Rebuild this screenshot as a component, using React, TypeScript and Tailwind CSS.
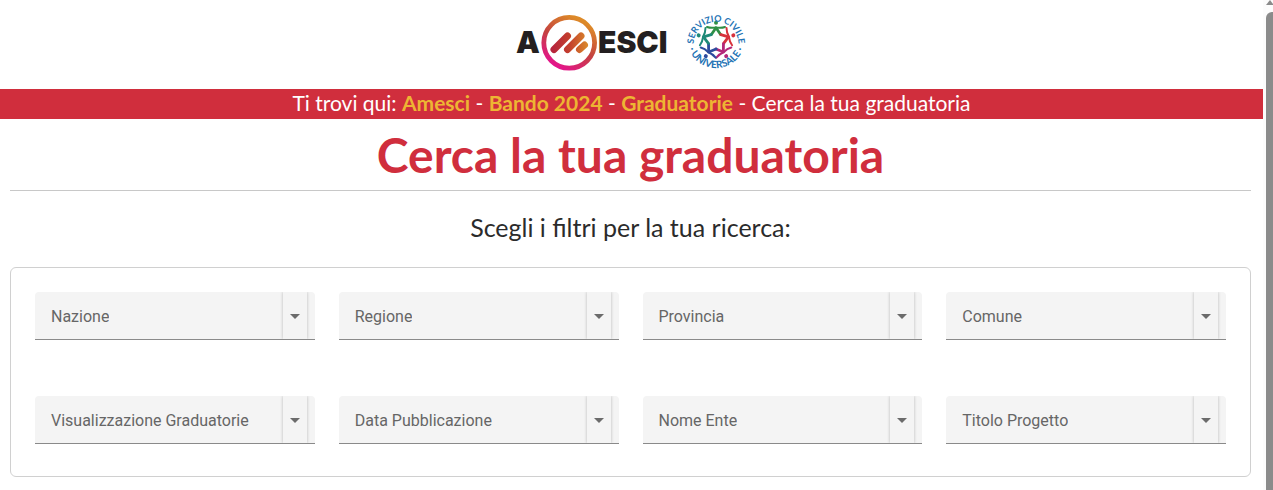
import { useId } from "react"

const filters = [
	"Nazione",
	"Regione",
	"Provincia",
	"Comune",
	"Visualizzazione Graduatorie",
	"Data Pubblicazione",
	"Nome Ente",
	"Titolo Progetto",
]

function AmesciLogo() {
	return (
		<svg width="160" height="60" viewBox="0 0 160 60" role="img" aria-label="Amesci">
			<defs>
				<linearGradient id="ring" x1="0.3" y1="1" x2="0.8" y2="0.1">
					<stop offset="0" stopColor="#e4148c" />
					<stop offset="0.5" stopColor="#c4423f" />
					<stop offset="1" stopColor="#dd8a28" />
				</linearGradient>
				<linearGradient id="bars" gradientUnits="userSpaceOnUse" x1="36" y1="0" x2="72" y2="0">
					<stop offset="0" stopColor="#b5233c" />
					<stop offset="0.5" stopColor="#c4402c" />
					<stop offset="1" stopColor="#da8a2c" />
				</linearGradient>
			</defs>
			<g fontSize="30" fontWeight="900" fill="#231f20" className="font-['Inter',sans-serif]">
				<text x="0" y="41">A</text>
				<text x="82" y="41">ESCI</text>
			</g>
			<circle cx="53.2" cy="30.8" r="25.4" fill="none" stroke="url(#ring)" strokeWidth="4.8" />
			<g stroke="url(#bars)" strokeWidth="7" strokeLinecap="round">
				<path d="M38 37.5L51.5 24" />
				<path d="M51.5 37.5L65 24" />
				<path d="M63.5 37.5L68.5 33" />
			</g>
		</svg>
	)
}

const figures = [
	{ color: "#2f8f45", angle: 0 },
	{ color: "#d8323c", angle: 72 },
	{ color: "#b3287a", angle: 146 },
	{ color: "#2d4c9e", angle: 214 },
	{ color: "#1f8a78", angle: 288 },
]

function ServizioCivileLogo() {
	return (
		<svg width="64" height="60" viewBox="-32 -29 64 60" role="img" aria-label="Servizio Civile Universale">
			<defs>
				<path id="arc-top" d="M-22 8A22.5 22.5 0 1 1 22 8" />
				<path id="arc-bottom" d="M-29 -2A29 29 0 0 0 29 -2" />
			</defs>
			{figures.map(({ color, angle }) => (
				<g
					key={color}
					transform={`rotate(${angle})`}
					stroke={color}
					fill="none"
					strokeLinecap="round"
					strokeLinejoin="round"
				>
					<circle cy="-18.2" r="2" fill={color} stroke="none" />
					<path d="M-9 -14Q-5 -12.6 0 -13.6Q5 -12.6 9 -14" strokeWidth="2" />
					<path d="M-4.6 -6.5L0 -13.2L4.6 -6.5" strokeWidth="2.8" />
				</g>
			))}
			<g fill="#2272b4" fontWeight="700" textAnchor="middle" className="font-['Lato',sans-serif]">
				<text fontSize="9">
					<textPath href="#arc-top" startOffset="50%">SERVIZIO CIVILE</textPath>
				</text>
				<text fontSize="10">
					<textPath href="#arc-bottom" startOffset="50%">· UNIVERSALE ·</textPath>
				</text>
			</g>
		</svg>
	)
}

function FilterSelect({ label }: { label: string }) {
	const id = useId()

	return (
		<div className="grid h-12 overflow-hidden rounded-t border-b border-[#8a8a8a] bg-[#f4f4f4] font-['Roboto',sans-serif] text-base text-[#666]">
			<select id={id} className="col-start-1 row-start-1 w-full appearance-none bg-transparent pl-4 outline-none">
				<option value=""></option>
			</select>
			<div className="pointer-events-none col-start-1 row-start-1 flex items-stretch justify-between pr-2">
				<label htmlFor={id} className="truncate self-center pt-0.5 pl-4">
					{label}
				</label>
				<span className="flex w-6 items-center justify-center pt-0.5 shadow-[0_0_3px_rgba(0,0,0,0.25)]">
					<svg width="10" height="5" viewBox="0 0 10 5" aria-hidden="true">
						<path d="M0 0H10L5 5Z" fill="#6b6b6b" />
					</svg>
				</span>
			</div>
		</div>
	)
}

function Scrollbar() {
	return (
		<div className="flex w-[10px] shrink-0 flex-col bg-[#fcfcfc] pl-[3px]" aria-hidden="true">
			<svg width="7" height="5" viewBox="0 0 7 5">
				<path d="M0 5L4 0L7 4V5Z" fill="#8b8b8b" />
			</svg>
			<div className="mt-[7px] flex-1 rounded-tl-md bg-[#8b8b8b]" />
		</div>
	)
}

export default function App() {
	return (
		<div className="flex min-h-screen bg-white font-['Lato',sans-serif] text-[#2b2b2b]">
			<div className="min-w-0 flex-1">
				<header className="flex h-[89px] items-start justify-center gap-2 pt-3">
					<AmesciLogo />
					<ServizioCivileLogo />
				</header>
				<nav className="bg-[#d02e3d] pb-0.5 text-center text-[21px] leading-7 text-white">
					Ti trovi qui:{" "}
					<a href="#amesci" className="font-bold text-[#edb533]">Amesci</a>
					{" - "}
					<a href="#bando-2024" className="font-bold text-[#edb533]">Bando 2024</a>
					{" - "}
					<a href="#graduatorie" className="font-bold text-[#edb533]">Graduatorie</a>
					{" - "}Cerca la tua graduatoria
				</nav>
				<main className="pr-3 pb-3 pl-[10px]">
					<h1 className="border-b border-[#c8c8c8] pt-2 pb-2 text-center text-[48px] leading-[55px] font-bold text-[#d02e3d]">
						Cerca la tua graduatoria
					</h1>
					<h2 className="pt-5 pb-6 text-center text-[25px] leading-8">Scegli i filtri per la tua ricerca:</h2>
					<form className="grid grid-cols-4 gap-x-6 gap-y-14 rounded-md border border-[#d0d0d0] px-6 pt-6 pb-8">
						{filters.map((label) => (
							<FilterSelect key={label} label={label} />
						))}
					</form>
				</main>
			</div>
			<Scrollbar />
		</div>
	)
}
